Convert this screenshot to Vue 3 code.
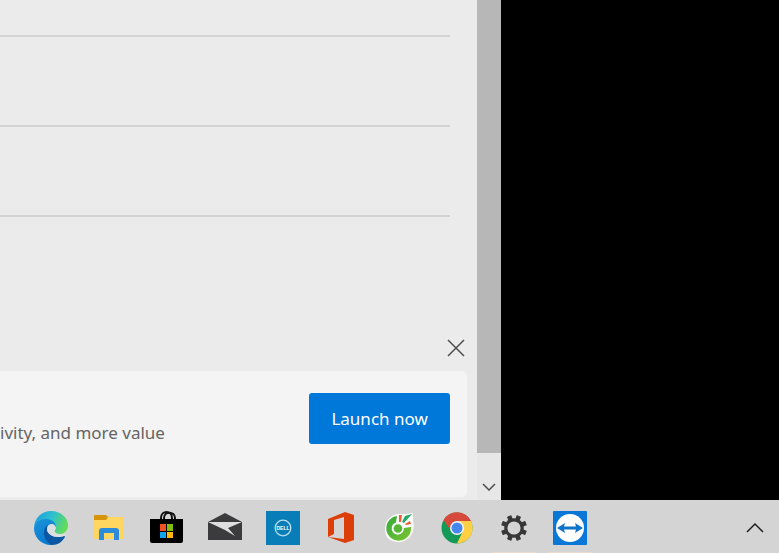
<template>
  <div class="screen">
    <div class="workspace">
      <section class="window">
        <div class="content">
          <div class="rows">
            <div v-for="n in 3" :key="n" class="row"></div>
          </div>
          <button class="close-btn" aria-label="Close">
            <svg viewBox="0 0 18 18"><path d="M1 1 17 17M17 1 1 17" /></svg>
          </button>
          <div class="banner">
            <p class="banner-text">ivity, and more value</p>
            <button class="launch-btn">Launch now</button>
          </div>
        </div>
        <div class="scrollbar">
          <div class="thumb"></div>
          <button class="scroll-down" aria-label="Scroll down">
            <svg viewBox="0 0 14 8"><path d="M1 1 7 7 13 1" /></svg>
          </button>
        </div>
      </section>
      <div class="desktop"></div>
    </div>

    <nav class="taskbar">
      <button class="task" aria-label="Edge">
        <svg viewBox="0 0 34 34">
          <defs>
            <linearGradient id="edgeTop" x1="0" y1="0.2" x2="1" y2="0.5">
              <stop offset="0" stop-color="#1b9fdc" />
              <stop offset="0.5" stop-color="#2fc0d0" />
              <stop offset="1" stop-color="#63dd55" />
            </linearGradient>
            <linearGradient id="edgeLeft" x1="0" y1="0" x2="0.5" y2="1">
              <stop offset="0" stop-color="#1a94d8" />
              <stop offset="1" stop-color="#0a78d0" />
            </linearGradient>
          </defs>
          <path d="M0 17C0 7 8 0 17 0c10 0 17 7 17 14 0 6-4 9-8 9-4 0-6-1-6-3 0-1 1-2 1-4 0-4-4-7-9-7-6 0-11 3-12 8Z" fill="url(#edgeTop)" />
          <path d="M0 17C1 11 6 8 12 8c6 0 10 4 10 8 0 2-1 2-1 2-1-3-4-3-6-1-5 4-2 14 5 17C9 35 0 28 0 17Z" fill="url(#edgeLeft)" />
          <path d="M15 13c-8 4-6 17 3 21 6 0 10-3 13-8q0-1-1-1c-8 3-17-1-17-7 0-2 0-4 2-5Z" fill="#0b57a4" />
          <path d="M13 18c0-4 3-5 5-5 2 0 4 2 4 4 0 2-2 2-1 4 1 2 5 3 9 2l2 1-2 1c-8 3-17-1-17-7Z" fill="#dcdfe2" />
        </svg>
      </button>
      <button class="task" aria-label="File Explorer">
        <svg viewBox="0 0 34 34">
          <path d="M2 6H32V27q0 1-1 1H3q-1 0-1-1Z" fill="#ffd65f" />
          <path d="M2 5q0-1 1-1h11l2 2-2 3H2Z" fill="#d69508" />
          <path d="M7 29V20q0-3 3-3h14q3 0 3 3v9h-5v-7h-10v7Z" fill="#2d8cda" />
        </svg>
      </button>
      <button class="task" aria-label="Microsoft Store">
        <svg viewBox="0 0 34 34">
          <path d="M11 10V7c0-8 11-8 11 0v3M14 10V7c0-7 11-7 11 0v3" fill="none" stroke="#111" stroke-width="2" />
          <path d="M0 8H33V30q0 2-2 2H2q-2 0-2-2Z" fill="#000" />
          <path d="M10 13h6v7h-6Z" fill="#f15125" />
          <path d="M17 13h6v7h-6Z" fill="#82bc10" />
          <path d="M10 21h6v6h-6Z" fill="#10a5ef" />
          <path d="M17 21h6v6h-6Z" fill="#ffba08" />
        </svg>
      </button>
      <button class="task" aria-label="Mail">
        <svg viewBox="0 0 34 34">
          <path d="M0 11 17 2 34 11V29H0Z" fill="#3b3b3d" />
          <path d="M0 11H34L20 17 27 25 17 19Z" fill="#dedede" />
        </svg>
      </button>
      <button class="task" aria-label="Dell">
        <svg viewBox="0 0 34 34">
          <rect width="34" height="34" fill="#087db8" />
          <circle cx="17" cy="17" r="7.8" fill="none" stroke="#b9deed" stroke-width="1.3" />
          <text x="17" y="19" class="dell">DELL</text>
        </svg>
      </button>
      <button class="task" aria-label="Office">
        <svg viewBox="0 0 34 34">
          <path d="M4 8 21 1 30 4V29L21 32 4 26 20 28V6L10 9V23L4 26Z" fill="#dc3e08" />
        </svg>
      </button>
      <button class="task" aria-label="Coc Coc">
        <svg viewBox="0 0 34 34">
          <defs>
            <linearGradient id="cocGreen" x1="0" y1="0" x2="1" y2="1">
              <stop offset="0" stop-color="#33a93f" />
              <stop offset="1" stop-color="#7cc52e" />
            </linearGradient>
          </defs>
          <path d="M17 3 24 3 31 2 31 10C34 21 27 31 17 31S3 26 3 18 9 3 17 3Z" fill="#fafcf8" />
          <path d="M15 5A12.400 12.400 0 1 0 29 16L22 17A6.200 6.200 0 1 1 14 11.500Z" fill="url(#cocGreen)" />
          <circle cx="16" cy="17.500" r="4.300" fill="#56b737" />
          <path d="m17 4 3 0-1 7h-2Z" fill="#f05a35" />
          <path d="m23 5 7-2-8 9-2-1Z" fill="#25a768" />
          <path d="m23 13 5-3 1 3-5 1Z" fill="#f05a35" />
        </svg>
      </button>
      <button class="task" aria-label="Chrome">
        <svg viewBox="0 0 34 34">
          <circle cx="17" cy="17" r="15.5" fill="#149957" />
          <path d="M17 10H31A15.5 15.5 0 0 1 17 32.500L23 20Z" fill="#ffcf45" />
          <path d="M3.500 9A15.500 15.500 0 0 1 31 10H17A7 7 0 0 0 11 20Z" fill="#d7493c" />
          <circle cx="17" cy="17" r="7" fill="#f5f5f5" />
          <circle cx="17" cy="17" r="5.500" fill="#4687ee" />
        </svg>
      </button>
      <button class="task open" aria-label="Settings">
        <svg viewBox="0 0 34 34">
          <g fill="#373737">
            <rect v-for="a in gearTeeth" :key="a" x="14.700" y="4" width="4.600" height="6" rx="0.5" :transform="`rotate(${a} 17 17)`" />
          </g>
          <circle cx="17" cy="17" r="8.200" fill="none" stroke="#373737" stroke-width="3.200" />
        </svg>
      </button>
      <button class="task open" aria-label="TeamViewer">
        <svg viewBox="0 0 34 34">
          <rect width="34" height="34" rx="1" fill="#0877d8" />
          <circle cx="17" cy="17" r="14" fill="#fff" />
          <path d="m4 17 8-5-1 3.500h12L22 12l8 5-8 5 1-3.500H11l1 3.500Z" fill="#0d74c9" />
        </svg>
      </button>
      <button class="tray" aria-label="Show hidden icons">
        <svg viewBox="0 0 18 10"><path d="M1 9 9 1 17 9" /></svg>
      </button>
    </nav>
  </div>
</template>

<script setup>
const gearTeeth = [22.5, 67.5, 112.5, 157.5, 202.5, 247.5, 292.5, 337.5];
</script>

<style>
body {
  margin: 0;
}
</style>

<style scoped>
.screen {
  display: flex;
  flex-direction: column;
  min-height: 100vh;
  font-family: "Noto Sans", "Open Sans", sans-serif;
}

button {
  border: none;
  padding: 0;
  background: none;
  font-family: inherit;
  cursor: pointer;
}

svg {
  display: block;
}

.workspace {
  flex: 1;
  display: grid;
  grid-template-columns: 9fr 5fr;
}

.window {
  display: flex;
  min-width: 0;
  background: #ebebeb;
}

.content {
  flex: 1;
  min-width: 0;
  display: flex;
  flex-direction: column;
  padding: 0 10px 3px 0;
}

.rows {
  flex: 1;
  margin-right: 17px;
}

.row {
  box-sizing: border-box;
  height: 90px;
  border-bottom: 2px solid #d3d3d3;
}

.row:first-child {
  height: 37px;
}

.close-btn {
  align-self: flex-end;
  padding: 2px;
  margin-bottom: 12px;
}

.close-btn svg {
  width: 18px;
  height: 18px;
}

.close-btn path,
.scroll-down path,
.tray path {
  fill: none;
  stroke: #4d4d4d;
  stroke-width: 1.5;
}

.banner {
  display: flex;
  align-items: flex-start;
  justify-content: space-between;
  box-sizing: border-box;
  min-height: 126px;
  padding: 22px 17px 22px 0;
  background: #f4f4f4;
  border-radius: 0 5px 5px 0;
}

.banner-text {
  margin: 28px 0 0;
  font-size: 17px;
  line-height: 24px;
  color: #646464;
  white-space: nowrap;
}

.launch-btn {
  height: 51px;
  padding: 0 22px;
  border-radius: 3px;
  background: #0078d9;
  color: #fff;
  font-size: 17px;
  white-space: nowrap;
}

.scrollbar {
  width: 24px;
  display: flex;
  flex-direction: column;
  background: #e7e7e7;
}

.thumb {
  flex: 1;
  background: #b7b7b7;
}

.scroll-down {
  display: flex;
  justify-content: center;
  padding: 30px 0 9px;
}

.scroll-down svg {
  width: 14px;
  height: 8px;
}

.desktop {
  background: #000;
}

.taskbar {
  display: flex;
  height: 53px;
  padding-left: 22px;
  background: #d4d4d4;
}

.task {
  display: flex;
  flex: 0 1 58px;
  justify-content: center;
  align-items: center;
  padding-top: 2px;
}

.task svg {
  width: 34px;
  height: 34px;
}

.open {
  flex-basis: 56px;
  background: linear-gradient(#ecd9ce, #ecd9ce) center bottom / 44px 1px no-repeat;
}

.dell {
  fill: #fff;
  font-family: "Liberation Sans", sans-serif;
  font-size: 5px;
  font-weight: bold;
  text-anchor: middle;
}

.tray {
  margin-left: auto;
  padding: 2px 15px 0;
}

.tray svg {
  width: 18px;
  height: 10px;
}

.tray path {
  stroke: #202020;
}
</style>
